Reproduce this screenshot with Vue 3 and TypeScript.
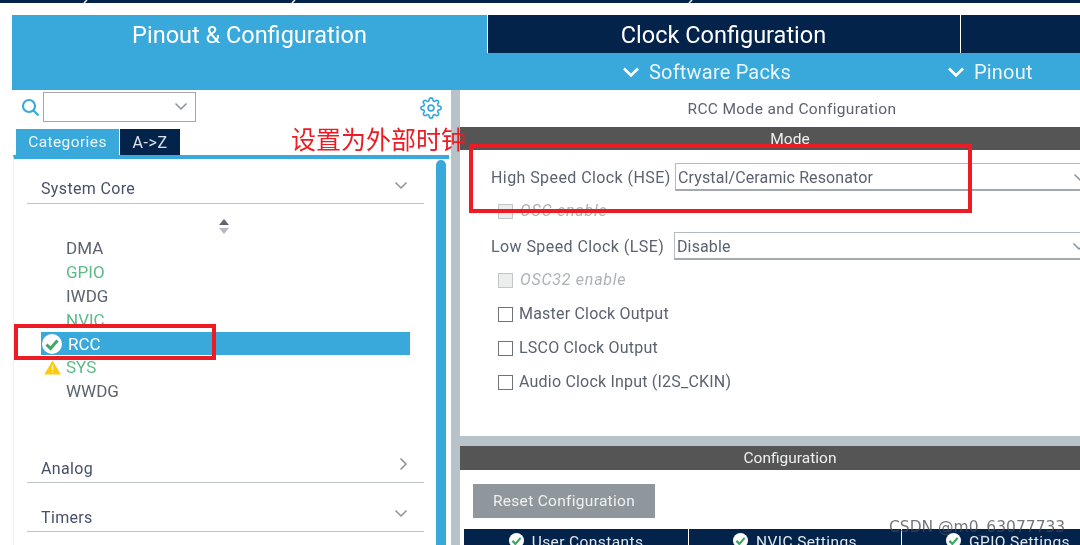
<template>
  <div class="page">
    <div class="strip">
      <svg class="strip-notches" width="1080" height="3" viewBox="0 0 1080 3">
        <path v-for="x in notchXs" :key="x" :d="`M${x} 3l3-3`" stroke="#fff" stroke-width="1.4" fill="none" />
      </svg>
    </div>

    <div class="workspace">
      <div class="main-tabs">
        <div class="main-tab active">Pinout &amp; Configuration</div>
        <div class="main-tab clock">Clock Configuration</div>
        <div class="main-tab"></div>
      </div>
      <div class="sub-bar">
        <div class="sub-item packs">
          <svg class="sub-chevron" width="18" height="12" viewBox="0 0 18 12"><path d="M2 2.5l7 7 7-7" /></svg>
          Software Packs
        </div>
        <div class="sub-item pinout">
          <svg class="sub-chevron" width="18" height="12" viewBox="0 0 18 12"><path d="M2 2.5l7 7 7-7" /></svg>
          Pinout
        </div>
      </div>

      <div class="body">
        <aside class="left">
          <div class="search-row">
            <svg class="search-icon" width="19" height="19" viewBox="0 0 19 19">
              <circle cx="8" cy="8" r="6" />
              <path d="M12.5 12.5l5 5" />
            </svg>
            <div class="search-box">
              <svg class="chevron" width="14" height="9" viewBox="0 0 14 9"><path d="M1.5 1.5l5.5 5.5 5.5-5.5" /></svg>
            </div>
            <svg class="gear" width="22" height="22" viewBox="0 0 24 24">
              <circle cx="12" cy="12" r="3.2" />
              <path d="M19.4 15a1.65 1.65 0 0 0 .33 1.82l.06.06a2 2 0 1 1-2.83 2.83l-.06-.06a1.65 1.65 0 0 0-1.82-.33 1.65 1.65 0 0 0-1 1.51V21a2 2 0 1 1-4 0v-.09A1.65 1.65 0 0 0 9 19.4a1.65 1.65 0 0 0-1.82.33l-.06.06a2 2 0 1 1-2.83-2.83l.06-.06a1.65 1.65 0 0 0 .33-1.82 1.65 1.65 0 0 0-1.51-1H3a2 2 0 1 1 0-4h.09A1.65 1.65 0 0 0 4.6 9a1.65 1.65 0 0 0-.33-1.82l-.06-.06a2 2 0 1 1 2.83-2.83l.06.06a1.65 1.65 0 0 0 1.82.33H9a1.65 1.65 0 0 0 1-1.51V3a2 2 0 1 1 4 0v.09a1.65 1.65 0 0 0 1 1.51 1.65 1.65 0 0 0 1.82-.33l.06-.06a2 2 0 1 1 2.83 2.83l-.06.06a1.65 1.65 0 0 0-.33 1.82V9a1.65 1.65 0 0 0 1.51 1H21a2 2 0 1 1 0 4h-.09a1.65 1.65 0 0 0-1.51 1z" />
            </svg>
          </div>

          <div class="cat-tabs">
            <div class="cat-tab active">Categories</div>
            <div class="cat-tab">A-&gt;Z</div>
          </div>

          <div class="cat-panel">
            <div class="cat-list">
              <div class="group-head first">
                <span>System Core</span>
                <svg class="chevron" width="14" height="9" viewBox="0 0 14 9"><path d="M1.5 1.5l5.5 5.5 5.5-5.5" /></svg>
              </div>
              <div class="sorter">
                <span class="sort-up"></span>
                <span class="sort-down"></span>
              </div>
              <div class="items">
                <div
                  v-for="item in items"
                  :key="item.name"
                  class="item"
                  :class="[item.tone, { selected: item.status === 'ok' }]"
                >
                  <svg v-if="item.status === 'ok'" class="item-ok" width="20" height="20" viewBox="0 0 20 20">
                    <circle cx="10" cy="10" r="10" fill="#fff" />
                    <path d="M4.5 10.5l4 4 7-8" fill="none" stroke="#3fa866" stroke-width="3" />
                  </svg>
                  <svg v-if="item.status === 'warn'" class="item-warn" width="17" height="15" viewBox="0 0 17 15">
                    <path d="M8.5 0.5L16.8 14.5H0.2z" fill="#ffc90e" />
                    <path d="M8.5 5v5M8.5 11.2v1.6" stroke="#fff3c0" stroke-width="1.4" />
                  </svg>
                  <span class="item-name">{{ item.name }}</span>
                </div>
              </div>
              <div class="group-head analog">
                <span>Analog</span>
                <svg class="chevron" width="9" height="14" viewBox="0 0 9 14"><path d="M1.5 1.5l5.5 5.5-5.5 5.5" /></svg>
              </div>
              <div class="group-head timers">
                <span>Timers</span>
                <svg class="chevron" width="14" height="9" viewBox="0 0 14 9"><path d="M1.5 1.5l5.5 5.5 5.5-5.5" /></svg>
              </div>
            </div>
            <div class="scroll-thumb"></div>
          </div>
        </aside>

        <div class="splitter"></div>

        <section class="right">
          <div class="pane-title">RCC Mode and Configuration</div>
          <div class="bar">Mode</div>
          <div class="mode-form">
            <div class="select-row">
              <label>High Speed Clock (HSE)</label>
              <div class="select">
                Crystal/Ceramic Resonator
                <svg class="chevron" width="14" height="9" viewBox="0 0 14 9"><path d="M1.5 1.5l5.5 5.5 5.5-5.5" /></svg>
              </div>
            </div>
            <div class="check-row disabled tight"><span class="box"></span><span class="check-label">OSC enable</span></div>
            <div class="select-row tight">
              <label>Low Speed Clock (LSE)</label>
              <div class="select lse">
                Disable
                <svg class="chevron" width="14" height="9" viewBox="0 0 14 9"><path d="M1.5 1.5l5.5 5.5 5.5-5.5" /></svg>
              </div>
            </div>
            <div class="check-row disabled tight"><span class="box"></span><span class="check-label">OSC32 enable</span></div>
            <div v-for="name in outputs" :key="name" class="check-row">
              <span class="box"></span><span class="check-label">{{ name }}</span>
            </div>
          </div>

          <div class="pane-gap"></div>
          <div class="bar config">Configuration</div>
          <div class="config-body">
            <div class="reset-btn">Reset Configuration</div>
            <div class="config-tabs">
              <div v-for="tab in configTabs" :key="tab.name" class="config-tab" :style="{ width: tab.width + 'px' }">
                <svg width="15" height="15" viewBox="0 0 20 20">
                  <circle cx="10" cy="10" r="10" fill="#fff" />
                  <path d="M4.5 10.5l4 4 7-8" fill="none" stroke="#3fa866" stroke-width="3" />
                </svg>
                {{ tab.name }}
              </div>
            </div>
          </div>
        </section>
      </div>
    </div>

    <!-- annotations drawn on top of the screenshot -->
    <div class="mark mark-rcc"></div>
    <div class="mark mark-hse"></div>
    <div class="note">设置为外部时钟</div>
    <div class="watermark">CSDN @m0_63077733</div>
  </div>
</template>

<script setup lang="ts">
interface Item {
  name: string
  tone: 'plain' | 'green'
  status?: 'ok' | 'warn'
}

const notchXs = [84, 292, 689]

const items: Item[] = [
  { name: 'DMA', tone: 'plain' },
  { name: 'GPIO', tone: 'green' },
  { name: 'IWDG', tone: 'plain' },
  { name: 'NVIC', tone: 'green' },
  { name: 'RCC', tone: 'plain', status: 'ok' },
  { name: 'SYS', tone: 'green', status: 'warn' },
  { name: 'WWDG', tone: 'plain' }
]

const outputs = ['Master Clock Output', 'LSCO Clock Output', 'Audio Clock Input (I2S_CKIN)']

const configTabs = [
  { name: 'User Constants', width: 225 },
  { name: 'NVIC Settings', width: 213 },
  { name: 'GPIO Settings', width: 213 }
]
</script>

<style>
html,
body {
  margin: 0;
  background: #fff;
}
</style>

<style scoped>
.page {
  position: relative;
  width: 1080px;
  height: 545px;
  overflow: hidden;
  background: #fff;
  font-family: Roboto, "Noto Sans CJK SC", sans-serif;
  color: #5b6270;
  filter: blur(0.35px);
}

.strip {
  height: 3px;
  background: #03234b;
}

.strip-notches {
  display: block;
}

.workspace {
  margin: 12px 0 0 12px;
  width: 1068px;
}

.main-tabs {
  display: grid;
  grid-template-columns: 475px 473px 1fr;
  height: 38px;
}

.main-tab {
  display: flex;
  align-items: center;
  justify-content: center;
  background: #03234b;
  color: #fff;
  font-size: 23.5px;
  padding-top: 2px;
  box-sizing: border-box;
  border-left: 1px solid #fff;
}

.main-tab.active {
  background: #39a9dc;
  border-left: 0;
}

.main-tab.clock {
  padding-right: 1px;
}

.sub-bar {
  display: flex;
  height: 37px;
  background: #39a9dc;
  color: #e9f6fc;
  font-size: 20px;
  letter-spacing: 0.2px;
}

.sub-item {
  display: flex;
  align-items: center;
  gap: 9px;
  padding-top: 1px;
}

.sub-item.packs {
  margin-left: 610px;
}

.sub-item.pinout {
  margin-left: 156px;
}

.sub-chevron path {
  fill: none;
  stroke: #fff;
  stroke-width: 2.6;
}

.chevron path {
  fill: none;
  stroke: #8b929a;
  stroke-width: 1.5;
}

.body {
  display: flex;
  height: 455px;
}

.left {
  width: 439px;
  flex: none;
  display: flex;
  flex-direction: column;
}

.search-row {
  display: flex;
  align-items: center;
  height: 39px;
  padding-left: 9px;
  box-sizing: border-box;
}

.search-icon {
  margin-top: -4px;
}

.search-icon circle,
.search-icon path {
  fill: none;
  stroke: #39a9dc;
  stroke-width: 2.2;
}

.search-box {
  display: flex;
  align-items: center;
  justify-content: flex-end;
  box-sizing: border-box;
  width: 153px;
  height: 30px;
  margin-left: 3px;
  margin-top: -6px;
  padding-right: 7px;
  border: 1.5px solid #a3a8ab;
}

.gear {
  margin-left: 224px;
  margin-top: -4px;
}

.gear circle,
.gear path {
  fill: none;
  stroke: #39a9dc;
  stroke-width: 1.8;
}

.cat-tabs {
  display: flex;
  gap: 1px;
  height: 26px;
  margin-left: 4px;
}

.cat-tab {
  display: flex;
  align-items: center;
  justify-content: center;
  width: 60px;
  background: #03234b;
  color: #d9e2ea;
  font-size: 16px;
  letter-spacing: 0.6px;
}

.cat-tab.active {
  width: 103px;
  background: #39a9dc;
  color: #e9f6fc;
  font-size: 15.5px;
  letter-spacing: 0.4px;
}

.cat-panel {
  position: relative;
  flex: 1;
  margin: 0 2px 0 1px;
  border-top: 4px solid #39a9dc;
  border-left: 1px solid #eef0f1;
  box-sizing: border-box;
}

.cat-list {
  padding-left: 13px;
  width: 397px;
}

.group-head {
  display: flex;
  align-items: center;
  justify-content: space-between;
  box-sizing: border-box;
  padding: 0 16px 0 14px;
  border-bottom: 1.5px solid #bcc3c9;
  color: #47506b;
  font-size: 16px;
  letter-spacing: 0.35px;
}

.group-head .chevron {
  margin-top: -5px;
}

.group-head.first {
  height: 45px;
  padding-top: 14px;
}

.group-head.analog {
  height: 32px;
  margin-top: 47.5px;
  padding-top: 4px;
}

.group-head.timers {
  height: 49px;
  padding-top: 21px;
}

.group-head.analog .chevron,
.group-head.timers .chevron {
  margin-top: -8px;
}

.sorter {
  display: flex;
  flex-direction: column;
  align-items: center;
  gap: 3px;
  height: 32.5px;
  box-sizing: border-box;
  padding: 15px 0 0 0;
  margin-left: -4px;
}

.sort-up,
.sort-down {
  width: 0;
  height: 0;
  border-left: 5px solid transparent;
  border-right: 5px solid transparent;
}

.sort-up {
  border-bottom: 6px solid #5f6670;
}

.sort-down {
  border-top: 6px solid #b6babd;
}

.items {
  margin-left: 14px;
  width: 369px;
}

.item {
  position: relative;
  display: flex;
  align-items: center;
  height: 23.8px;
  padding-left: 25px;
  font-size: 17px;
  color: #5b6270;
}

.item.green {
  color: #5dbb85;
}

.item.selected {
  background: #39a9dc;
  color: #fff;
  padding-left: 27px;
}

.item-ok {
  position: absolute;
  left: 1px;
  top: 2px;
}

.item-warn {
  position: absolute;
  left: 3px;
  top: 5px;
}

.scroll-thumb {
  position: absolute;
  top: 1px;
  bottom: 0;
  left: 422px;
  width: 10px;
  border-radius: 5px 5px 0 0;
  background: #39a9dc;
}

.splitter {
  width: 9px;
  flex: none;
  background: #b7c3c9;
}

.right {
  width: 660px;
  flex: none;
  display: flex;
  flex-direction: column;
}

.pane-title {
  display: flex;
  flex: none;
  align-items: center;
  justify-content: center;
  box-sizing: border-box;
  height: 37px;
  padding: 0 0 0 4px;
  font-size: 15.5px;
  letter-spacing: 0.35px;
}

.bar {
  display: flex;
  flex: none;
  align-items: center;
  justify-content: center;
  box-sizing: border-box;
  height: 23px;
  background: #545554;
  color: #eef0f0;
  font-size: 15.5px;
}

.bar.config {
  height: 24px;
}

.mode-form {
  flex: none;
  height: 286px;
  box-sizing: border-box;
  padding: 13px 0 0 31px;
}

.select-row {
  display: flex;
  align-items: center;
  font-size: 16px;
  letter-spacing: 0.42px;
}

.select-row label {
  width: 184px;
  flex: none;
  white-space: nowrap;
  padding-top: 1px;
}

.select {
  display: flex;
  align-items: center;
  justify-content: space-between;
  box-sizing: border-box;
  width: 414px;
  height: 28px;
  padding: 1px 0 0 2px;
  border: 1px solid #b4babd;
  border-bottom: 2px solid #a3a9ad;
  color: #5b6270;
  letter-spacing: 0.12px;
}

.select.lse {
  margin-left: -1px;
}

.select .chevron {
  margin-right: 1px;
}

.check-row {
  display: flex;
  align-items: center;
  gap: 6px;
  height: 15px;
  margin: 19px 0 0 7px;
  font-size: 16px;
  letter-spacing: 0.2px;
}

.check-label {
  margin-top: -2px;
  white-space: nowrap;
}

.tight {
  margin-top: 13px;
}

.box {
  flex: none;
  width: 15px;
  height: 15px;
  box-sizing: border-box;
  border: 1.5px solid #6f7478;
  background: #fff;
}

.disabled {
  color: #aeb2b5;
  font-style: italic;
  letter-spacing: 0.75px;
}

.disabled .box {
  border-color: #c3c6c8;
  background: #eceded;
}

.disabled .check-label {
  margin-left: 1px;
}

.pane-gap {
  flex: none;
  height: 10px;
  background: #b7c3c9;
}

.config-body {
  flex: 1;
  min-height: 0;
  padding: 14px 0 0 4px;
}

.reset-btn {
  display: flex;
  align-items: center;
  justify-content: center;
  width: 182px;
  height: 34px;
  margin-left: 9px;
  background: #90979c;
  color: #eef0f1;
  font-size: 15.5px;
  letter-spacing: 0.3px;
}

.config-tabs {
  display: flex;
  margin-top: 11px;
  height: 16px;
  overflow: hidden;
}

.config-tab {
  display: flex;
  align-items: flex-start;
  justify-content: center;
  gap: 8px;
  padding-top: 4px;
  height: 30px;
  box-sizing: border-box;
  background: #03234b;
  border-right: 1px solid #fff;
  color: #e4eaf0;
  font-size: 15.5px;
  letter-spacing: 0.4px;
}

.mark {
  position: absolute;
  box-sizing: border-box;
  border: 4px solid #ed1c24;
}

.mark-rcc {
  left: 14px;
  top: 324px;
  width: 202px;
  height: 36px;
}

.mark-hse {
  left: 469px;
  top: 144px;
  width: 503px;
  height: 69px;
}

.note {
  position: absolute;
  left: 291px;
  top: 122px;
  font-size: 25px;
  line-height: 32px;
  color: #ed1c24;
  font-family: "Noto Sans CJK SC", sans-serif;
  white-space: nowrap;
}

.watermark {
  position: absolute;
  left: 889px;
  top: 518px;
  font-size: 15.5px;
  line-height: 18px;
  color: rgba(70, 75, 80, 0.75);
  font-family: "DejaVu Sans", sans-serif;
  white-space: nowrap;
}
</style>
